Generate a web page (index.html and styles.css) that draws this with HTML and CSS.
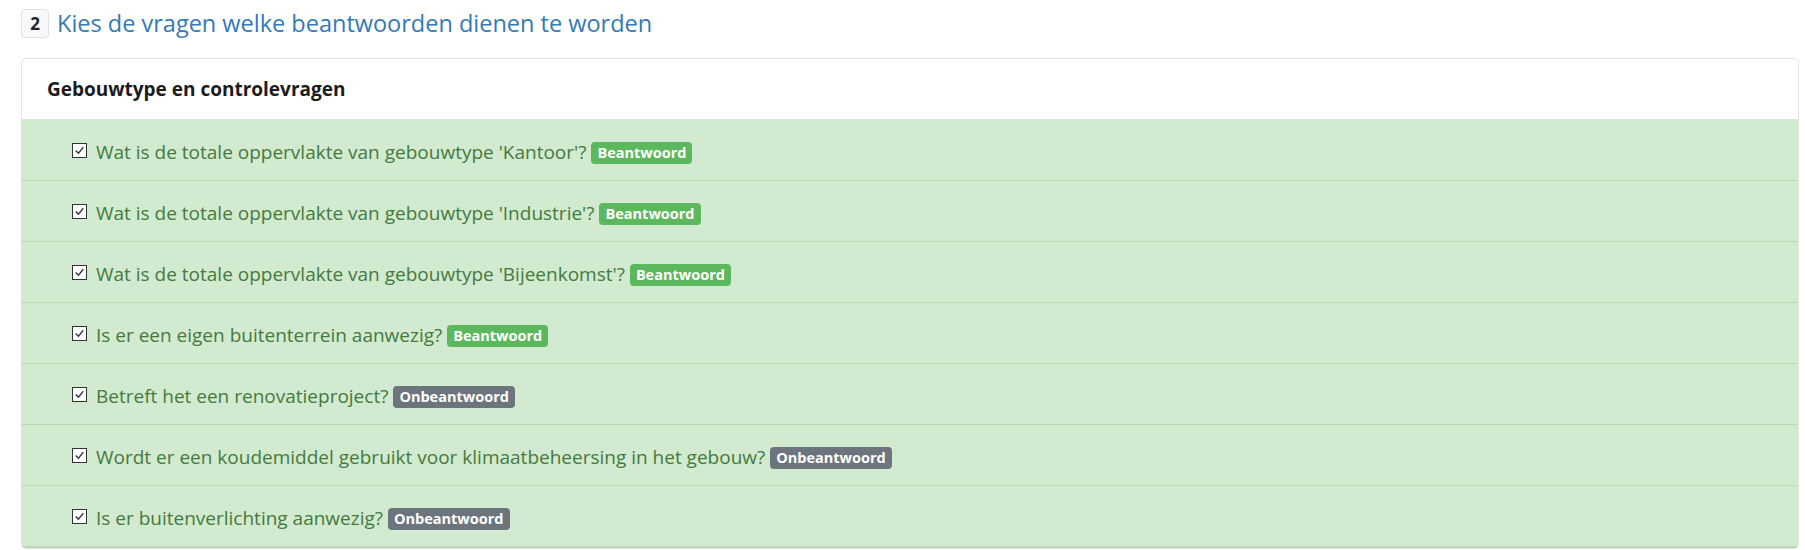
FILE: index.html
```html
<!DOCTYPE html>
<html lang="nl">
<head>
  <meta charset="UTF-8" />
  <title>Vragen kiezen</title>
  <link rel="stylesheet" href="styles.css">
</head>
<body>
  <h2 class="step-title"><span class="step-num">2</span>Kies de vragen welke beantwoorden dienen te worden</h2>

  <div class="card">
    <div class="card-header">Gebouwtype en controlevragen</div>
    <ul class="questions">
      <li class="question">
        <span class="check"><svg viewBox="0 0 12 12"><path d="M2.5 6 L5 8.5 L9.5 3" /></svg></span>
        <span class="q-text">Wat is de totale oppervlakte van gebouwtype 'Kantoor'?</span>
        <span class="badge badge-done">Beantwoord</span>
      </li>
      <li class="question">
        <span class="check"><svg viewBox="0 0 12 12"><path d="M2.5 6 L5 8.5 L9.5 3" /></svg></span>
        <span class="q-text">Wat is de totale oppervlakte van gebouwtype 'Industrie'?</span>
        <span class="badge badge-done">Beantwoord</span>
      </li>
      <li class="question">
        <span class="check"><svg viewBox="0 0 12 12"><path d="M2.5 6 L5 8.5 L9.5 3" /></svg></span>
        <span class="q-text">Wat is de totale oppervlakte van gebouwtype 'Bijeenkomst'?</span>
        <span class="badge badge-done">Beantwoord</span>
      </li>
      <li class="question">
        <span class="check"><svg viewBox="0 0 12 12"><path d="M2.5 6 L5 8.5 L9.5 3" /></svg></span>
        <span class="q-text">Is er een eigen buitenterrein aanwezig?</span>
        <span class="badge badge-done">Beantwoord</span>
      </li>
      <li class="question">
        <span class="check"><svg viewBox="0 0 12 12"><path d="M2.5 6 L5 8.5 L9.5 3" /></svg></span>
        <span class="q-text">Betreft het een renovatieproject?</span>
        <span class="badge badge-open">Onbeantwoord</span>
      </li>
      <li class="question">
        <span class="check"><svg viewBox="0 0 12 12"><path d="M2.5 6 L5 8.5 L9.5 3" /></svg></span>
        <span class="q-text">Wordt er een koudemiddel gebruikt voor klimaatbeheersing in het gebouw?</span>
        <span class="badge badge-open">Onbeantwoord</span>
      </li>
      <li class="question">
        <span class="check"><svg viewBox="0 0 12 12"><path d="M2.5 6 L5 8.5 L9.5 3" /></svg></span>
        <span class="q-text">Is er buitenverlichting aanwezig?</span>
        <span class="badge badge-open">Onbeantwoord</span>
      </li>
    </ul>
  </div>
</body>
</html>
```

FILE: styles.css
```css
body {
  margin: 0;
  padding: 9px 6px 0 21px;
  font-family: 'Open Sans', sans-serif;
  background: #fff;
  color: #212529;
}
.step-title {
  display: flex;
  align-items: center;
  margin: 0 0 21px;
  height: 28px;
  font-size: 23.5px;
  font-weight: 400;
  color: #337ab7;
}
.step-num {
  display: inline-flex;
  align-items: center;
  justify-content: center;
  width: 26px;
  height: 27px;
  margin-right: 8px;
  background: #f8f9fa;
  border: 1px solid #dee2e6;
  border-radius: 4px;
  color: #212529;
  font-size: 17px;
  font-weight: 700;
}
.card {
  border: 1px solid #e3e3e3;
  border-radius: 5px;
  overflow: hidden;
}
.card-header {
  height: 60px;
  display: flex;
  align-items: center;
  padding: 0 25px;
  font-size: 19px;
  font-weight: 700;
  color: #1c1c1c;
  border-bottom: 1px solid #e3e3e3;
}
.questions {
  list-style: none;
  margin: 0;
  padding: 0;
}
.question {
  height: 60px;
  display: flex;
  align-items: center;
  padding-left: 50px;
  background: #d2eacf;
  border-bottom: 1px solid #bcd8b8;
  color: #457a3e;
  font-size: 19px;
}
.question:last-child {
  border-bottom: 2px solid #bcd8b8;
}
.check {
  flex: none;
  width: 15px;
  height: 15px;
  margin-right: 9px;
  border: 1px solid #333;
  background: #fff;
  box-sizing: border-box;
}
.check svg {
  display: block;
  width: 13px;
  height: 13px;
}
.check path {
  fill: none;
  stroke: #333;
  stroke-width: 1.2;
}
.q-text {
  margin-top: 4px;
}
.badge {
  margin: 6px 0 0 5px;
  padding: 2px 6px;
  border-radius: 4px;
  color: #fff;
  font-size: 14.5px;
  font-weight: 700;
  line-height: 18px;
}
.badge-done {
  background: #5cb85c;
}
.badge-open {
  background: #6c757d;
}
```
